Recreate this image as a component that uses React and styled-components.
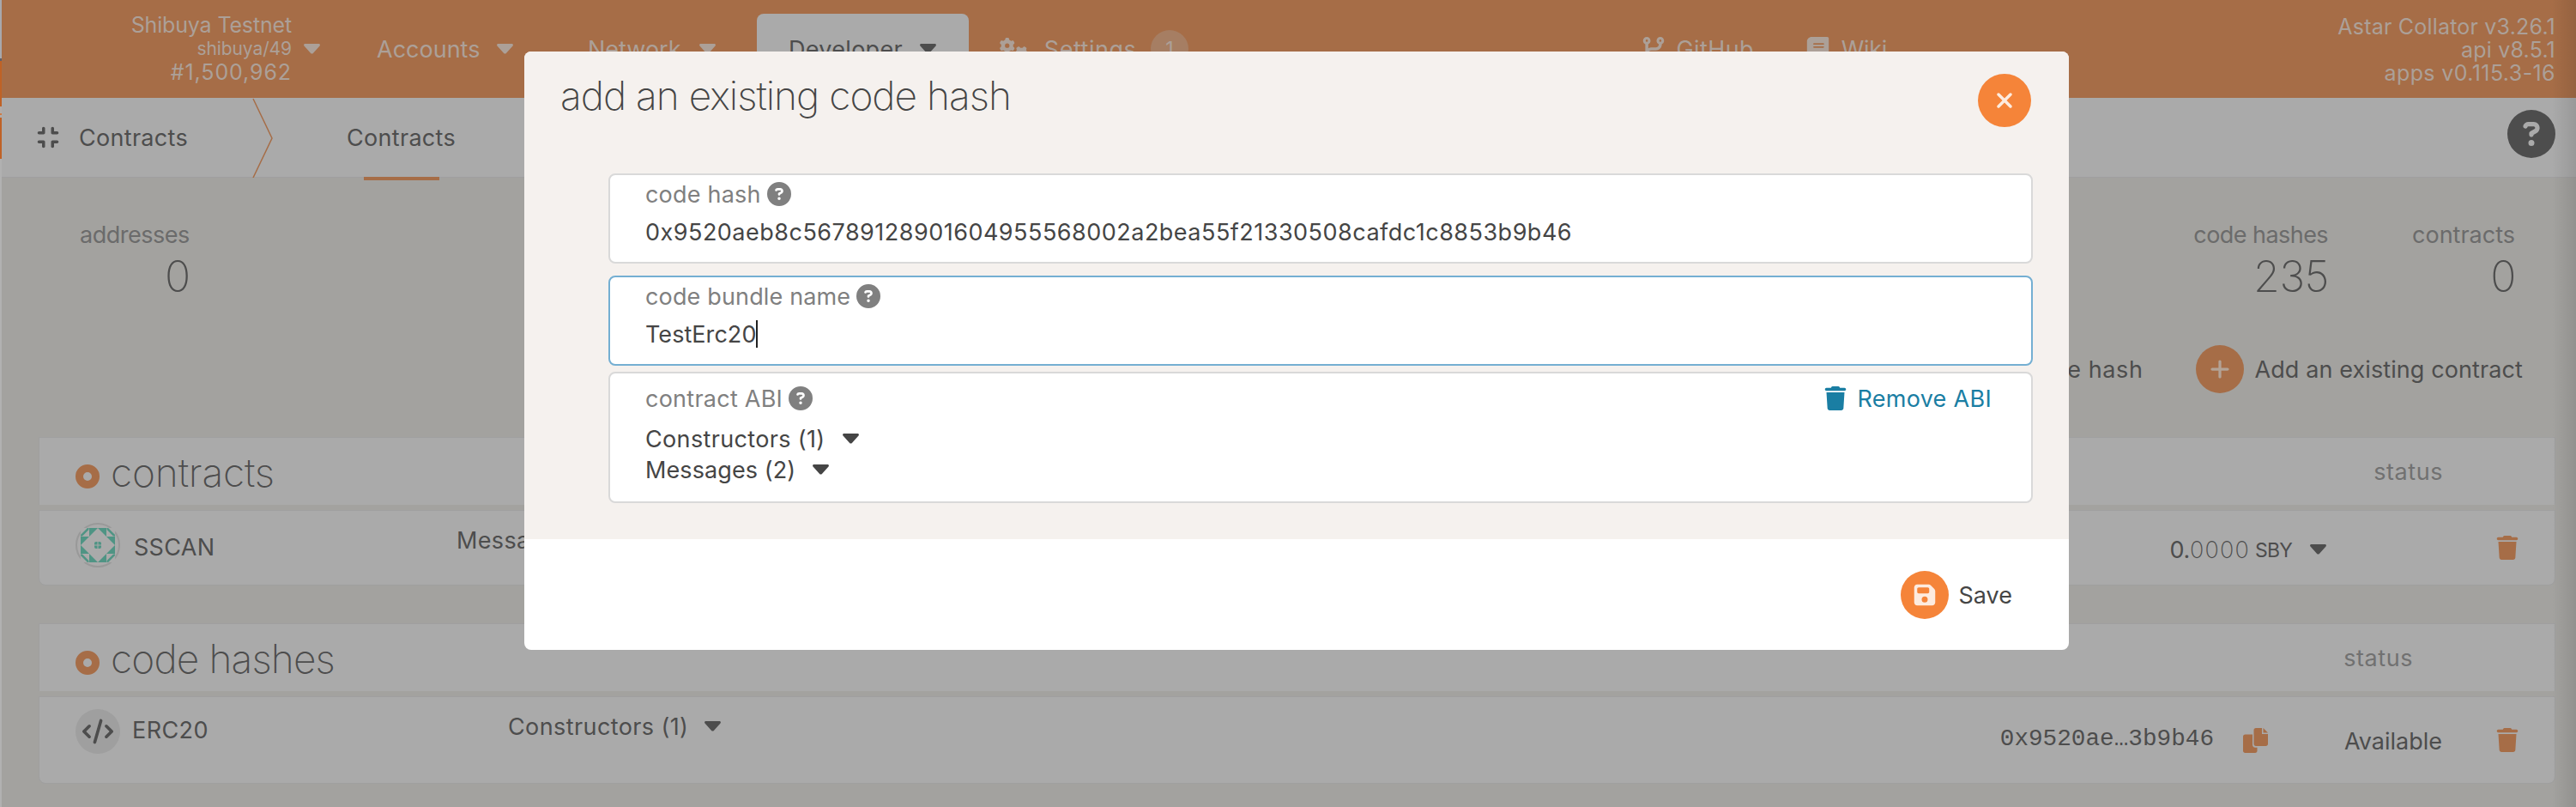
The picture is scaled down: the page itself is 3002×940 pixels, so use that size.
import React from 'react';
import styled, { createGlobalStyle } from 'styled-components';
import {
  FaBook,
  FaCode,
  FaCodeBranch,
  FaCompress,
  FaFloppyDisk,
  FaGears,
  FaPlus,
  FaCircleQuestion,
  FaTrash,
  FaXmark,
} from 'react-icons/fa6';

const GlobalStyle = createGlobalStyle`
  * { box-sizing: border-box; }
  body {
    margin: 0;
    overflow: hidden;
    font-family: Inter, "Liberation Sans", sans-serif;
    font-size: 27px;
    line-height: 28px;
    color: #4d4d4d;
    background: #a3a29f;
  }
  svg { display: block; flex: none; }
`;

const Text = styled.span`
  display: block;
  white-space: pre;
  letter-spacing: ${(p) => p.$ls || 0}px;
  transform: translateY(1px);
`;

const Shell = styled.div`
  position: relative;
  width: 3002px;
  height: 940px;
  padding-left: 2px;
  background: linear-gradient(#a7a8ad 0 68px, #60606a 68px 71px, #bf6226 71px 124px, #b3aca8 124px 132px,
    #cf7b45 132px 134px, #b3aca8 134px 137px, #bf6226 137px 185px, #b1b1b1 185px);
  &::after {
    content: '';
    position: absolute;
    top: 0;
    right: 0;
    width: 28px;
    height: 100%;
    background: linear-gradient(90deg, rgba(0, 0, 0, 0), rgba(0, 0, 0, 0.1));
  }
`;

const Page = styled.main`
  height: 940px;
  background: #a3a29f;
`;

const TopBar = styled.header`
  display: flex;
  align-items: center;
  height: 114px;
  background: #a66d47;
  color: #aca098;
`;

const Chain = styled.div`
  display: flex;
  align-items: center;
  gap: 14px;
  width: 371px;
  justify-content: flex-end;
`;

const ChainLines = styled.div`
  display: flex;
  flex-direction: column;
  align-items: flex-end;
  margin-top: -2px;
  font-size: 25px;
  line-height: 27.5px;
`;

const Small = styled(Text)`
  font-size: 21px;
`;

const MenuItem = styled.div`
  display: flex;
  align-items: center;
  justify-content: space-between;
  width: ${(p) => p.$width}px;
  margin-left: ${(p) => p.$gap}px;
`;

const ActiveItem = styled(MenuItem)`
  align-self: flex-end;
  height: 98px;
  padding: 0 38px 16px 37px;
  border-radius: 8px 8px 0 0;
  background: #aaaaaa;
  color: #4d4d4d;
`;

const Counter = styled.span`
  display: flex;
  align-items: center;
  justify-content: center;
  width: 44px;
  height: 44px;
  border-radius: 50%;
  background: #a67e63;
  font-size: 23px;
`;

const Versions = styled.div`
  display: flex;
  flex-direction: column;
  align-items: flex-end;
  margin: 0 24px 0 auto;
  font-size: 25px;
  line-height: 27px;
`;

const TabBar = styled.nav`
  display: flex;
  height: 93px;
  padding-left: 40px;
  background: #aaaaaa;
  border-bottom: 1px solid #9f9f9f;
`;

const Section = styled.div`
  display: flex;
  align-items: center;
  gap: 22px;
  width: 251px;
  height: 92px;
`;

const Tab = styled.div`
  display: flex;
  flex-direction: column;
  align-items: center;
  width: 131px;
  margin-left: 83px;
  padding-top: 32px;
`;

const TabLine = styled.div`
  width: 88px;
  height: 4px;
  margin-top: 32px;
  flex: none;
  background: #a66d47;
`;

const HelpButton = styled.div`
  margin: 14px 24px 0 auto;
`;

const Summary = styled.section`
  display: flex;
  justify-content: flex-end;
  height: 195px;
  padding: 52px 71px 0 0;
`;

const Stat = styled.div`
  display: flex;
  flex-direction: column;
  align-items: flex-end;
  margin-left: ${(p) => p.$gap || 0}px;
  margin-right: ${(p) => (p.$first ? 'auto' : 0)};
  color: #6b6b6b;
`;

const StatValue = styled.span`
  margin: 10px -1px 0 0;
  font-size: 50px;
  font-weight: 200;
  line-height: 50px;
  letter-spacing: -0.5px;
  color: #4d4d4d;
`;

const Actions = styled.div`
  display: flex;
  justify-content: flex-end;
  height: 107px;
  padding-right: 62px;
  gap: 62px;
`;

const Action = styled.div`
  display: flex;
  align-items: center;
  height: 56px;
  gap: 12px;
`;

const Disc = styled.span`
  display: flex;
  align-items: center;
  justify-content: center;
  flex: none;
  width: ${(p) => p.$size || 56}px;
  height: ${(p) => p.$size || 56}px;
  border-radius: 50%;
  background: ${(p) => (p.$dim ? '#a66d47' : '#f58439')};
  color: ${(p) => (p.$dim ? '#b3a396' : '#fdebdf')};
`;

const Table = styled.section`
  width: 2933px;
  margin: 0 0 44px 43px;
`;

const TableHead = styled.div`
  display: flex;
  align-items: center;
  height: 79px;
  padding-left: 42px;
  padding-right: ${(p) => p.$right}px;
  border: 1px solid #9f9f9f;
  border-bottom: 0;
  background: #aaaaaa;
  color: #717171;
`;

const Ring = styled.span`
  width: 28px;
  height: 28px;
  margin: 11px 13px 0 0;
  border: 9px solid #a66d47;
  border-radius: 50%;
`;

const TableTitle = styled(Text)`
  flex: 1;
  font-size: 46px;
  font-weight: 200;
  color: #4d4d4d;
`;

const TableRow = styled.div`
  display: flex;
  height: ${(p) => p.$height}px;
  margin-top: 6px;
  padding: 0 41px 0 42px;
  border: 1px solid #9f9f9f;
  border-radius: 0 0 8px 8px;
  background: #aaaaaa;
`;

const Cell = styled.div`
  display: flex;
  align-items: center;
  height: 28px;
  width: ${(p) => (p.$width ? `${p.$width}px` : 'auto')};
  margin-top: ${(p) => p.$top}px;
  margin-left: ${(p) => (p.$push ? 'auto' : `${p.$left || 0}px`)};
  gap: ${(p) => p.$gap || 0}px;
  ${(p) => p.$accent && 'color: #a66d47;'}
`;

const Avatar = styled.span`
  display: flex;
  align-items: center;
  justify-content: center;
  width: 52px;
  height: 52px;
  margin-top: 14px;
  border-radius: 50%;
  background: ${(p) => (p.$plain ? '#aaaaaa' : '#9f9f9f')};
  border: ${(p) => (p.$plain ? '2px solid #999999' : '0')};
`;

const Thin = styled(Text)`
  font-weight: 200;
`;

const Unit = styled(Text)`
  margin-left: 6px;
  font-size: 23px;
`;

const Hash = styled.span`
  font-family: "Liberation Mono", monospace;
  font-size: 27.7px;
`;

const Modal = styled.div`
  position: absolute;
  z-index: 1;
  top: 60px;
  left: 611px;
  width: 1800px;
  height: 697px;
  overflow: hidden;
  border-radius: 8px;
  background: #ffffff;
  color: #454545;
`;

const ModalBody = styled.div`
  height: 568px;
  background: #f5f1ee;
`;

const ModalHead = styled.div`
  display: flex;
  justify-content: space-between;
  height: 142px;
  padding: 26px 44px 0 42px;
`;

const ModalTitle = styled.h1`
  margin: 0;
  font-size: 46px;
  font-weight: 200;
  line-height: 50px;
  letter-spacing: -1px;
`;

const Fields = styled.div`
  padding: 0 42px 0 98px;
`;

const Field = styled.div`
  height: ${(p) => p.$height || 105}px;
  margin-bottom: ${(p) => p.$after || 0}px;
  padding: ${(p) => p.$top || 8}px 46px 0 41px;
  border: 2px solid ${(p) => (p.$focus ? '#74afd2' : '#d9d9d9')};
  border-radius: 8px;
  background: #ffffff;
`;

const Label = styled.div`
  display: flex;
  align-items: center;
  gap: 7px;
  color: #808080;
`;

const Value = styled.div`
  display: flex;
  margin-top: 16px;
`;

const Cursor = styled.span`
  width: 2px;
  height: 32px;
  margin: -2px 0;
  background: #222222;
`;

const RemoveLink = styled.div`
  display: flex;
  align-items: center;
  gap: 11px;
  margin-left: auto;
  color: #1a7ea3;
`;

const Lines = styled.div`
  margin-top: 15px;
`;

const Line = styled.div`
  display: flex;
  align-items: center;
  gap: 20px;
  height: 36px;
`;

const ModalFoot = styled.div`
  display: flex;
  align-items: center;
  justify-content: flex-end;
  gap: 12px;
  height: 129px;
  padding-right: 66px;
`;

const Caret = ({ size = 19 }) => (
  <svg width={size} height={(size * 12) / 19} viewBox="0 0 19 12" fill="currentColor">
    <path d="M1.5 0h16c1.3 0 1.9 1.5 1 2.5l-7.6 8.4c-.8.9-2 .9-2.8 0L.5 2.5C-.4 1.5.2 0 1.5 0z" />
  </svg>
);

const CopyIcon = () => (
  <svg width="29" height="29" viewBox="0 0 29 29" fill="currentColor">
    <path d="M15 0h7v7h7v11.5c0 1.5-1 2.5-2.5 2.5H15c-1.5 0-2.5-1-2.5-2.5v-16C12.5 1 13.5 0 15 0z" />
    <path d="M23.5 0l5.5 5.5h-5.5z" />
    <path d="M2.5 7.5H11v12c0 2 1.2 3.2 3.2 3.2h2.3v3.8c0 1.5-1 2.5-2.5 2.5H2.5C1 29 0 28 0 26.5V10c0-1.5 1-2.5 2.5-2.5z" />
  </svg>
);

const Identicon = () => (
  <svg width="40" height="40" viewBox="0 0 40 40">
    <path fill="#4f9484" d="M0 0h40v40H0z" />
    <g fill="#aaaaaa">
      <path d="M20 0l20 20-20 20L0 20z" />
      <path d="M10 0v10H0zM30 0l10 10H30zM0 30h10v10zM30 30h10L30 40z" />
      <path d="M0 0h8L0 8zM32 0h8v8zM0 32l8 8H0zM40 32v8h-8z" />
    </g>
    <g fill="none" stroke="#4f9484" strokeWidth="2">
      <path d="M1 9L9 1M31 1l8 8M1 31l8 8M31 39l8-8" />
    </g>
    <rect x="16" y="16" width="8" height="8" rx="2" fill="#4f9484" />
    <path stroke="#aaaaaa" d="M20 16v8M16 20h8" />
  </svg>
);

const TrashIcon = ({ size = 28 }) => <FaTrash size={size} />;

export default function App() {
  return (
    <>
      <GlobalStyle />
      <Shell>
        <Page>
          <TopBar>
            <Chain>
              <ChainLines>
                <Text $ls={-0.15}>Shibuya Testnet</Text>
                <Small $ls={-0.1}>shibuya/49</Small>
                <Text $ls={0.9}>#1,500,962</Text>
              </ChainLines>
              <Caret />
            </Chain>
            <MenuItem $width={159} $gap={66}><Text>Accounts</Text><Caret /></MenuItem>
            <MenuItem $width={149} $gap={87}><Text>Network</Text><Caret /></MenuItem>
            <ActiveItem $width={247} $gap={48}><Text $ls={0.3}>Developer</Text><Caret /></ActiveItem>
            <MenuItem $width={220} $gap={36}>
              <FaGears size={35} />
              <Text $ls={0.5}>Settings</Text>
              <Counter>1</Counter>
            </MenuItem>
            <MenuItem $width={131} $gap={528}><FaCodeBranch size={28} /><Text $ls={0.4}>GitHub</Text></MenuItem>
            <MenuItem $width={95} $gap={60}><FaBook size={29} /><Text $ls={-0.3}>Wiki</Text></MenuItem>
            <Versions>
              <Text $ls={0.2}>Astar Collator v3.26.1</Text>
              <Text $ls={0.2}>api v8.5.1</Text>
              <Text $ls={0.4}>apps v0.115.3-16</Text>
            </Versions>
          </TopBar>

          <TabBar>
            <Section>
              <FaCompress size={28} />
              <Text $ls={0.3}>Contracts</Text>
            </Section>
            <svg width="26" height="93" viewBox="0 0 26 93" fill="none" stroke="#a66d47" strokeWidth="1.5">
              <path d="M2 1l22 46L2 93" />
            </svg>
            <Tab>
              <Text $ls={0.3}>Contracts</Text>
              <TabLine />
            </Tab>
            <HelpButton><FaCircleQuestion size={56} /></HelpButton>
          </TabBar>

          <Summary>
            <Stat $first $gap={91}><Text $ls={-0.49}>addresses</Text><StatValue>0</StatValue></Stat>
            <Stat><Text $ls={-0.56}>code hashes</Text><StatValue>235</StatValue></Stat>
            <Stat $gap={98}><Text>contracts</Text><StatValue>0</StatValue></Stat>
          </Summary>

          <Actions>
            <Action><Disc $dim><FaPlus size={26} /></Disc><Text $ls={0.6}>Add an existing code hash</Text></Action>
            <Action><Disc $dim><FaPlus size={26} /></Disc><Text $ls={0.1}>Add an existing contract</Text></Action>
          </Actions>

          <Table>
            <TableHead $right={130}>
              <Ring />
              <TableTitle $ls={-0.15}>contracts</TableTitle>
              <Text $ls={0.56}>status</Text>
            </TableHead>
            <TableRow $height={88}>
              <Avatar $plain><Identicon /></Avatar>
              <Cell $top={28} $left={16} $width={376}><Text $ls={0.3}>SSCAN</Text></Cell>
              <Cell $top={20} $gap={20}><Text $ls={0.34}>Messages (2)</Text><Caret /></Cell>
              <Cell $top={31} $push>
                <Text $ls={-0.3}>0.</Text>
                <Thin $ls={1.2}>0000</Thin>
                <Unit $ls={-0.8}>SBY</Unit>
              </Cell>
              <Cell $top={31} $left={21} $width={216}><Caret /></Cell>
              <Cell $top={29} $accent><TrashIcon /></Cell>
            </TableRow>
          </Table>

          <Table>
            <TableHead $right={165}>
              <Ring />
              <TableTitle $ls={-0.85}>code hashes</TableTitle>
              <Text $ls={0.56}>status</Text>
            </TableHead>
            <TableRow $height={102}>
              <Avatar><FaCode size={36} /></Avatar>
              <Cell $top={24} $left={14} $width={438}><Text $ls={0.4}>ERC20</Text></Cell>
              <Cell $top={20} $gap={19}><Text $ls={0.4}>Constructors (1)</Text><Caret /></Cell>
              <Cell $top={35} $push><Hash>0x9520ae…3b9b46</Hash></Cell>
              <Cell $top={36} $left={34} $width={118} $accent><CopyIcon /></Cell>
              <Cell $top={37} $width={176}><Text>Available</Text></Cell>
              <Cell $top={36} $accent><TrashIcon /></Cell>
            </TableRow>
          </Table>
        </Page>

        <Modal>
          <ModalBody>
            <ModalHead>
              <ModalTitle>add an existing code hash</ModalTitle>
              <Disc $size={62}><FaXmark size={28} /></Disc>
            </ModalHead>
            <Fields>
              <Field $after={14}>
                <Label><Text $ls={0.2}>code hash</Text><FaCircleQuestion size={28} /></Label>
                <Value><Text $ls={0.49}>0x9520aeb8c56789128901604955568002a2bea55f21330508cafdc1c8853b9b46</Text></Value>
              </Field>
              <Field $after={7} $focus>
                <Label><Text $ls={0.15}>code bundle name</Text><FaCircleQuestion size={28} /></Label>
                <Value><Text $ls={0.05}>TestErc20</Text><Cursor /></Value>
              </Field>
              <Field $height={153} $top={15}>
                <Label>
                  <Text $ls={0.25}>contract ABI</Text>
                  <FaCircleQuestion size={28} />
                  <RemoveLink><TrashIcon /><Text $ls={0.3}>Remove ABI</Text></RemoveLink>
                </Label>
                <Lines>
                  <Line><Text $ls={0.35}>Constructors (1)</Text><Caret /></Line>
                  <Line><Text $ls={0.1}>Messages (2)</Text><Caret /></Line>
                </Lines>
              </Field>
            </Fields>
          </ModalBody>
          <ModalFoot>
            <Disc><FaFloppyDisk size={28} /></Disc>
            <Text>Save</Text>
          </ModalFoot>
        </Modal>
      </Shell>
    </>
  );
}
